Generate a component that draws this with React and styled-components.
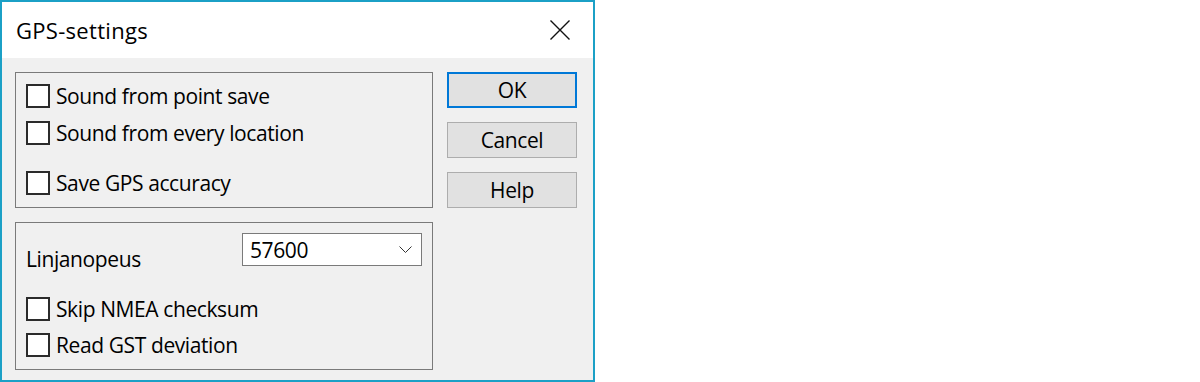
import React from "react";
import styled, { createGlobalStyle } from "styled-components";

const GlobalStyle = createGlobalStyle`
  body {
    margin: 0;
    background: #fff;
    font-family: "Open Sans", "Noto Sans", sans-serif;
    color: #000;
  }
`;

const Window = styled.div`
  box-sizing: border-box;
  width: 595px;
  height: 382px;
  border: 2px solid #1ba0c6;
  background: #f0f0f0;
  display: flex;
  flex-direction: column;
`;

const TitleBar = styled.div`
  height: 56px;
  background: #fff;
  display: flex;
  align-items: center;
  justify-content: space-between;
  padding: 0 23px 0 14px;
`;

const Title = styled.span`
  font-size: 22px;
  letter-spacing: 0.3px;
  line-height: 28px;
`;

const Body = styled.div`
  display: flex;
  gap: 14px;
  padding: 14px 0 0 13px;
`;

const LeftColumn = styled.div`
  display: flex;
  flex-direction: column;
  gap: 14px;
  width: 418px;
`;

const GroupBox = styled.div`
  box-sizing: border-box;
  height: ${p => p.$height}px;
  border: 1px solid #7a7a7a;
  padding: 0 10px;
  display: flex;
  flex-direction: column;
`;

const CheckRow = styled.label`
  display: flex;
  align-items: center;
  gap: 6px;
  height: 24px;
  margin-top: ${p => p.$top}px;
  font-size: 21px;
  letter-spacing: -0.4px;
  line-height: 28px;
`;

const Box = styled.span`
  box-sizing: border-box;
  width: 24px;
  height: 24px;
  flex: none;
  background: #fff;
  border: 2px solid #2b2b2b;
`;

const SpeedRow = styled.div`
  display: flex;
  justify-content: space-between;
  align-items: flex-start;
  margin-top: 10px;
`;

const FieldLabel = styled.span`
  margin-top: 12px;
  font-size: 21px;
  letter-spacing: -0.4px;
  line-height: 28px;
`;

const Select = styled.div`
  box-sizing: border-box;
  width: 180px;
  height: 33px;
  background: #fff;
  border: 1px solid #7a7a7a;
  display: flex;
  align-items: center;
  justify-content: space-between;
  padding: 0 9px 0 7px;
  font-size: 21px;
  letter-spacing: -0.4px;
  line-height: 28px;
`;

const ButtonColumn = styled.div`
  display: flex;
  flex-direction: column;
  gap: 14px;
  width: 130px;
`;

const Button = styled.button`
  box-sizing: border-box;
  height: 36px;
  width: 130px;
  padding: 0;
  background: #e1e1e1;
  border: ${p => (p.$default ? "2px solid #0078d7" : "1px solid #adadad")};
  font-family: inherit;
  font-size: 21px;
  letter-spacing: -0.4px;
  line-height: 28px;
  color: #000;
`;

const CloseIcon = () => (
  <svg width="20" height="20" viewBox="0 0 20 20">
    <path d="M0.5 0.5 L19.5 19.5 M19.5 0.5 L0.5 19.5" stroke="#111" strokeWidth="1.4" fill="none" />
  </svg>
);

const Chevron = () => (
  <svg width="13" height="7" viewBox="0 0 13 7">
    <polyline points="0.5,0.5 6.5,6.5 12.5,0.5" stroke="#333" strokeWidth="1" fill="none" />
  </svg>
);

const Check = ({ top, children }) => (
  <CheckRow $top={top}>
    <Box />
    <span>{children}</span>
  </CheckRow>
);

export default function App() {
  return (
    <>
      <GlobalStyle />
      <Window>
        <TitleBar>
          <Title>GPS-settings</Title>
          <CloseIcon />
        </TitleBar>
        <Body>
          <LeftColumn>
            <GroupBox $height={136}>
              <Check top={11}>Sound from point save</Check>
              <Check top={13}>Sound from every location</Check>
              <Check top={26}>Save GPS accuracy</Check>
            </GroupBox>
            <GroupBox $height={148}>
              <SpeedRow>
                <FieldLabel>Linjanopeus</FieldLabel>
                <Select>
                  <span>57600</span>
                  <Chevron />
                </Select>
              </SpeedRow>
              <Check top={24}>Skip NMEA checksum</Check>
              <Check top={12}>Read GST deviation</Check>
            </GroupBox>
          </LeftColumn>
          <ButtonColumn>
            <Button $default>OK</Button>
            <Button>Cancel</Button>
            <Button>Help</Button>
          </ButtonColumn>
        </Body>
      </Window>
    </>
  );
}
